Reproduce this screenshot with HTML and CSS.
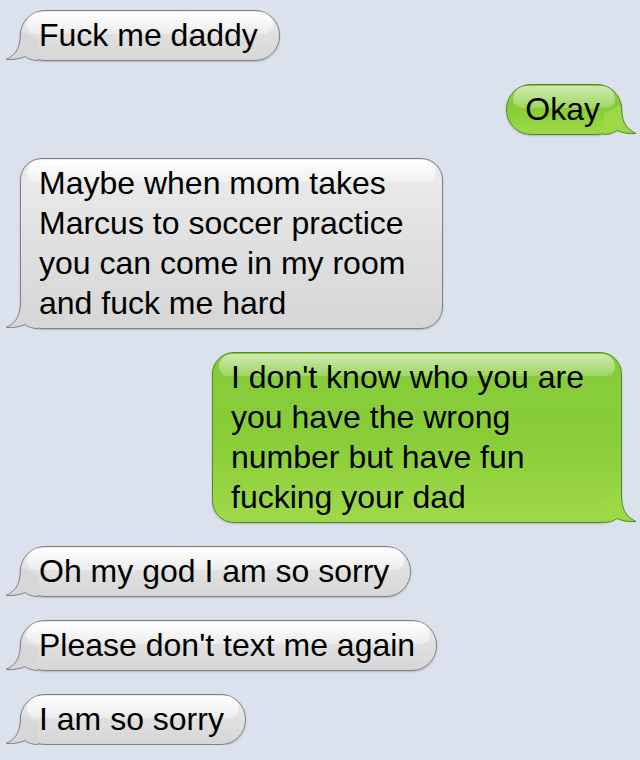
FILE: index.html
```html
<!DOCTYPE html>
<html lang="en">
<head>
    <meta charset="UTF-8">
    <meta name="viewport" content="width=device-width, initial-scale=1.0">
    <title>Messages</title>
    <link rel="stylesheet" href="styles.css">
</head>
<body>
    <div class="thread">
        <div class="bubble in">
            <span>Fuck me daddy</span>
            <svg class="tail" viewBox="0 0 34 36"><path class="tail-fill" d="M15.5,6 C15.5,20 13,29 1,34.5 C8,35 15,34 20,31.5 C23,34 27,35.5 33,35.5 L33,14 Z"/><path class="tail-line" d="M15.5,6 C15.5,20 13,29 1,34.5 C8,35 15,34 20,31.5 C23,34 27,35.5 33,35.5"/></svg>
        </div>
        <div class="bubble out">
            <span>Okay</span>
            <svg class="tail" viewBox="0 0 34 36"><path class="tail-fill" d="M15.5,6 C15.5,20 13,29 1,34.5 C8,35 15,34 20,31.5 C23,34 27,35.5 33,35.5 L33,14 Z"/><path class="tail-line" d="M15.5,6 C15.5,20 13,29 1,34.5 C8,35 15,34 20,31.5 C23,34 27,35.5 33,35.5"/></svg>
        </div>
        <div class="bubble in multi">
            <span>Maybe when mom takes<br>Marcus to soccer practice<br>you can come in my room<br>and fuck me hard</span>
            <svg class="tail" viewBox="0 0 34 36"><path class="tail-fill" d="M15.5,6 C15.5,20 13,29 1,34.5 C8,35 15,34 20,31.5 C23,34 27,35.5 33,35.5 L33,14 Z"/><path class="tail-line" d="M15.5,6 C15.5,20 13,29 1,34.5 C8,35 15,34 20,31.5 C23,34 27,35.5 33,35.5"/></svg>
        </div>
        <div class="bubble out multi">
            <span>I don't know who you are<br>you have the wrong<br>number but have fun<br>fucking your dad</span>
            <svg class="tail" viewBox="0 0 34 36"><path class="tail-fill" d="M15.5,6 C15.5,20 13,29 1,34.5 C8,35 15,34 20,31.5 C23,34 27,35.5 33,35.5 L33,14 Z"/><path class="tail-line" d="M15.5,6 C15.5,20 13,29 1,34.5 C8,35 15,34 20,31.5 C23,34 27,35.5 33,35.5"/></svg>
        </div>
        <div class="bubble in">
            <span>Oh my god I am so sorry</span>
            <svg class="tail" viewBox="0 0 34 36"><path class="tail-fill" d="M15.5,6 C15.5,20 13,29 1,34.5 C8,35 15,34 20,31.5 C23,34 27,35.5 33,35.5 L33,14 Z"/><path class="tail-line" d="M15.5,6 C15.5,20 13,29 1,34.5 C8,35 15,34 20,31.5 C23,34 27,35.5 33,35.5"/></svg>
        </div>
        <div class="bubble in">
            <span>Please don't text me again</span>
            <svg class="tail" viewBox="0 0 34 36"><path class="tail-fill" d="M15.5,6 C15.5,20 13,29 1,34.5 C8,35 15,34 20,31.5 C23,34 27,35.5 33,35.5 L33,14 Z"/><path class="tail-line" d="M15.5,6 C15.5,20 13,29 1,34.5 C8,35 15,34 20,31.5 C23,34 27,35.5 33,35.5"/></svg>
        </div>
        <div class="bubble in">
            <span>I am so sorry</span>
            <svg class="tail" viewBox="0 0 34 36"><path class="tail-fill" d="M15.5,6 C15.5,20 13,29 1,34.5 C8,35 15,34 20,31.5 C23,34 27,35.5 33,35.5 L33,14 Z"/><path class="tail-line" d="M15.5,6 C15.5,20 13,29 1,34.5 C8,35 15,34 20,31.5 C23,34 27,35.5 33,35.5"/></svg>
        </div>
    </div>
</body>
</html>
```

FILE: styles.css
```css
body {
    margin: 0;
    background-color: #dbe2ed;
    font-family: 'Liberation Sans', Arial, sans-serif;
    color: #000;
}
.thread {
    display: flex;
    flex-direction: column;
    gap: 23px;
    padding: 10px 18px 0 20px;
}
.bubble {
    position: relative;
    padding: 4px 21px 5px 18px;
    font-size: 32px;
    line-height: 40px;
    border: 1px solid #808080;
    border-radius: 25px;
    box-shadow: 0 1px 2px rgba(0,0,0,0.2);
}
.bubble span {
    position: relative;
    z-index: 2;
}
.bubble::before {
    content: '';
    position: absolute;
    top: 1px;
    left: 6px;
    right: 6px;
    height: 22px;
    border-radius: 20px 20px 14px 14px;
    background: linear-gradient(rgba(255,255,255,0.95), rgba(255,255,255,0.35));
}
.bubble.multi {
    border-radius: 22px;
    padding-right: 37px;
}
.in {
    align-self: flex-start;
    background: linear-gradient(#ececec, #e0e0e0 50%, #d6d6d6);
}
.out {
    align-self: flex-end;
    border-color: #4f8a22;
    background: linear-gradient(#86cb3a, #88cd38 50%, #9fd949);
}
.out::before {
    background: linear-gradient(rgba(255,255,255,0.6), rgba(255,255,255,0.2));
}
.tail {
    position: absolute;
    bottom: -1px;
    left: -16px;
    width: 34px;
    height: 36px;
    z-index: 1;
    overflow: visible;
}
.out .tail {
    left: auto;
    right: -16px;
    transform: scaleX(-1);
}
.tail-fill {
    fill: #d7d7d7;
}
.tail-line {
    fill: none;
    stroke: #808080;
    stroke-width: 1;
}
.out .tail-fill {
    fill: #9dd847;
}
.out .tail-line {
    stroke: #4f8a22;
}
```
